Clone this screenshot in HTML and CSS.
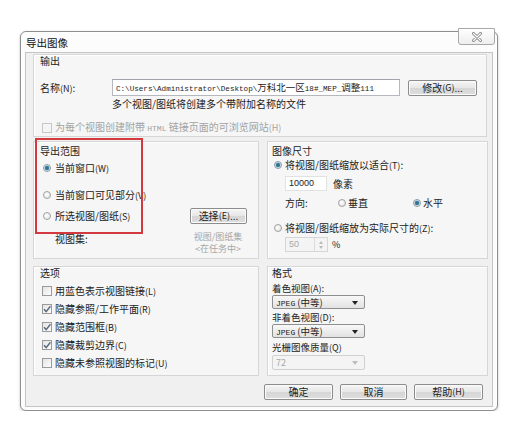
FILE: index.html
```html
<!DOCTYPE html>
<html lang="zh-CN">
<head>
<meta charset="utf-8">
<title>导出图像</title>
<link rel="stylesheet" href="styles.css">
</head>
<body>
<div class="dialog">
  <div class="titlebar">导出图像</div>
  <div class="close">
    <svg width="12" height="10" viewBox="0 0 12 10"><path d="M2.5 1.5 L9.5 8.5 M9.5 1.5 L2.5 8.5" stroke="#8a8a8a" stroke-width="3" stroke-linecap="round" fill="none"/><path d="M2.5 1.5 L9.5 8.5 M9.5 1.5 L2.5 8.5" stroke="#fff" stroke-width="1.1" stroke-linecap="round" fill="none"/></svg>
  </div>
  <div class="content">
    <div class="group output">
      <div class="legend">输出</div>
      <div class="name-row">
        <span class="name-label">名称<span class="k">(N)</span>:</span>
        <div class="path-input">C:\Users\Administrator\Desktop\<span class="cjk">万科北一区</span>18#_MEP_<span class="cjk">调整</span>111</div>
        <div class="btn btn-modify">修改<span class="k">(G)</span>...</div>
      </div>
      <div class="note">多个视图/图纸将创建多个带附加名称的文件</div>
      <div class="check-row disabled">
        <span class="checkbox"></span>
        <span>为每个视图创建附带 <span class="mono">HTML</span> 链接页面的可浏览网站<span class="k">(H)</span></span>
      </div>
    </div>

    <div class="grid">
      <div class="group range">
        <div class="redbox"></div>
        <div class="legend">导出范围</div>
        <div class="radio-row r1"><span class="radio on"></span><span>当前窗口<span class="k">(W)</span></span></div>
        <div class="radio-row r2"><span class="radio"></span><span>当前窗口可见部分<span class="k">(V)</span></span></div>
        <div class="range-grid">
          <div class="radio-row"><span class="radio"></span><span>所选视图/图纸<span class="k">(S)</span></span></div>
          <div class="btn btn-select">选择<span class="k">(E)</span>...</div>
          <div class="viewset">视图集:</div>
          <div class="viewset-val"><div>视图/图纸集</div><div class="vs2">&lt;在任务中&gt;</div></div>
        </div>
      </div>

      <div class="group size">
        <div class="legend">图像尺寸</div>
        <div class="radio-row s1"><span class="radio on"></span><span>将视图/图纸缩放以适合<span class="k">(T)</span>:</span></div>
        <div class="px-row"><div class="num-input">10000</div><span class="unit">像素</span></div>
        <div class="dir-row">
          <span>方向:</span>
          <span class="radio-row"><span class="radio"></span><span>垂直</span></span>
          <span class="radio-row"><span class="radio on"></span><span>水平</span></span>
        </div>
        <div class="radio-row s2"><span class="radio"></span><span>将视图/图纸缩放为实际尺寸的<span class="k">(Z)</span>:</span></div>
        <div class="spin-row">
          <div class="spin"><span class="spin-val">50</span><span class="spin-btns"><span class="up"></span><span class="down"></span></span></div>
          <span class="pct">%</span>
        </div>
      </div>

      <div class="group options">
        <div class="legend">选项</div>
        <div class="check-row"><span class="checkbox"></span><span>用蓝色表示视图链接<span class="k">(L)</span></span></div>
        <div class="check-row"><span class="checkbox checked"><svg width="10" height="10" viewBox="0 0 10 10"><path d="M2 5.2 L4.2 7.6 L8.4 2.2" stroke="#5b6b7a" stroke-width="1.5" fill="none"/></svg></span><span>隐藏参照/工作平面<span class="k">(R)</span></span></div>
        <div class="check-row"><span class="checkbox checked"><svg width="10" height="10" viewBox="0 0 10 10"><path d="M2 5.2 L4.2 7.6 L8.4 2.2" stroke="#5b6b7a" stroke-width="1.5" fill="none"/></svg></span><span>隐藏范围框<span class="k">(B)</span></span></div>
        <div class="check-row"><span class="checkbox checked"><svg width="10" height="10" viewBox="0 0 10 10"><path d="M2 5.2 L4.2 7.6 L8.4 2.2" stroke="#5b6b7a" stroke-width="1.5" fill="none"/></svg></span><span>隐藏裁剪边界<span class="k">(C)</span></span></div>
        <div class="check-row"><span class="checkbox"></span><span>隐藏未参照视图的标记<span class="k">(U)</span></span></div>
      </div>

      <div class="group format">
        <div class="legend">格式</div>
        <div class="flabel">着色视图<span class="k">(A)</span>:</div>
        <div class="select"><span><span class="mono">JPEG</span> (中等)</span><span class="arrow"></span></div>
        <div class="flabel">非着色视图<span class="k">(D)</span>:</div>
        <div class="select"><span><span class="mono">JPEG</span> (中等)</span><span class="arrow"></span></div>
        <div class="flabel">光栅图像质量<span class="k">(Q)</span></div>
        <div class="select disabled"><span>72</span><span class="arrow"></span></div>
      </div>
    </div>

    <div class="buttons">
      <div class="btn b1">确定</div>
      <div class="btn b2">取消</div>
      <div class="btn b3">帮助<span class="k">(H)</span></div>
    </div>
  </div>
</div>
</body>
</html>
```

FILE: styles.css
```css
* { box-sizing: border-box; }

body {
  margin: 0;
  padding: 31px 0 0 20px;
  background: #fff;
  font-family: "Noto Sans CJK SC", "Noto Sans", sans-serif;
  font-size: 10px;
  color: #222;
}

.dialog {
  position: relative;
  width: 478px;
  height: 380px;
  border: 1px solid #8e8e8e;
  border-radius: 6px;
  background: #fcfcfc;
  box-shadow: 0 1px 3px rgba(0,0,0,0.22), inset 0 0 0 1px #fff;
  display: flex;
  flex-direction: column;
}

.titlebar {
  height: 20px;
  line-height: 21px;
  padding-left: 5px;
  font-size: 10.5px;
  color: #111;
}

.close {
  position: absolute;
  top: -4px;
  right: 2px;
  width: 37px;
  height: 17px;
  border: 1px solid #a8a8a8;
  border-radius: 0 0 3px 3px;
  background: linear-gradient(#ffffff, #eeeeee);
  display: flex;
  align-items: center;
  justify-content: center;
}

.content {
  flex: 1;
  margin: 0 4px 3px;
  border: 1px solid #c4c4c4;
  background: #f0f0f0;
  padding: 1px 5px 0 7px;
  display: flex;
  flex-direction: column;
}

.group {
  position: relative;
  border: 1px solid #d6d6d6;
  background: #f6f6f6;
  box-shadow: inset 1px 1px 0 #fff;
}

.legend {
  line-height: 12px;
  height: 12px;
}

.k { font-size: 9px; }
.mono { font-family: "Liberation Mono", monospace; font-size: 8px; }

/* output */
.output {
  height: 83px;
  padding: 0 6px;
}

.name-row {
  margin-top: 12px;
  display: flex;
  align-items: center;
  height: 17px;
}

.name-label { width: 72px; }

.path-input {
  width: 288px;
  height: 17px;
  border: 1px solid #b5b8bf;
  border-top-color: #a0a3aa;
  background: #fff;
  font-family: "Liberation Mono", "Noto Sans CJK SC", monospace;
  font-size: 7.6px;
  line-height: 15px;
  padding-left: 3px;
  white-space: nowrap;
  overflow: hidden;
}

.path-input .cjk {
  font-family: "Noto Sans CJK SC", sans-serif;
  font-size: 9.5px;
}

.btn {
  height: 16px;
  border: 1px solid #8c8c8c;
  border-radius: 2px;
  background: linear-gradient(#f6f6f6 0%, #e6e6e6 50%, #d6d6d6 51%, #dedede 100%);
  box-shadow: inset 0 0 0 1px #fbfbfb;
  display: flex;
  align-items: center;
  justify-content: center;
  line-height: 12px;
}

.btn-modify { width: 69px; margin-left: 8px; }

.note {
  margin-top: 2px;
  padding-left: 72px;
  line-height: 12px;
}

.check-row {
  display: flex;
  align-items: center;
  height: 12px;
  line-height: 12px;
}

.output .check-row { margin-top: 12px; }

.checkbox {
  width: 10px;
  height: 10px;
  margin-left: 2px;
  margin-right: 3px;
  border: 1px solid #9a9a9a;
  background: linear-gradient(135deg, #e4e4e4, #fdfdfd);
  display: flex;
  align-items: center;
  justify-content: center;
  flex: none;
}

.checkbox svg { display: block; margin: -1px; }

.disabled { color: #a3a3a3; }
.disabled .checkbox { border-color: #c6c6c6; background: #f4f4f4; }

/* grid */
.grid {
  margin-top: 4px;
  display: grid;
  grid-template-columns: 226px 221px;
  grid-template-rows: 118px 110px;
  column-gap: 8px;
  row-gap: 7px;
}

.range { padding: 3px 6px 0; }

.redbox {
  position: absolute;
  left: 1px;
  top: -4px;
  width: 108px;
  height: 96px;
  border: 2px solid #d23a3f;
}

.radio-row {
  display: flex;
  align-items: center;
  height: 12px;
  line-height: 12px;
  white-space: nowrap;
}

.radio {
  width: 8px;
  height: 8px;
  border-radius: 50%;
  border: 1px solid #a2a2a2;
  background: radial-gradient(circle at 40% 40%, #fff, #dcdcdc);
  margin-left: 3px;
  margin-right: 4px;
  flex: none;
}

.radio.on {
  background: radial-gradient(circle, #2f6c8c 0, #3a7d9c 1.8px, #cfe0ea 2.6px, #f4f4f4 4px);
  border-color: #8a9aa6;
}

.range .r1 { margin-top: 5px; }
.range .r2 { margin-top: 15px; }

.range-grid {
  margin-top: 7px;
  display: grid;
  grid-template-columns: 148px 60px;
  grid-template-rows: 16px 22px;
  row-gap: 7px;
  align-items: center;
}

.btn-select { width: 57px; margin-left: 2px; }

.viewset {
  align-self: start;
  padding-top: 2px;
  padding-left: 15px;
  line-height: 12px;
}

.viewset-val {
  align-self: start;
  text-align: center;
  font-size: 9px;
  line-height: 11px;
  color: #a6a6a6;
  white-space: nowrap;
}

.viewset-val .vs2 { margin-top: 1px; }

/* size */
.size { padding: 3px 4px 0; }
.size .radio { margin-left: 2px; margin-right: 3px; }
.size .s1 { margin-top: 2px; }

.px-row {
  margin-top: 5px;
  padding-left: 13px;
  display: flex;
  align-items: center;
  height: 15px;
}

.num-input {
  width: 42px;
  height: 15px;
  border: 1px solid #e2e2e2;
  background: #fff;
  font-family: "Liberation Sans", sans-serif;
  font-size: 9px;
  line-height: 13px;
  padding-left: 3px;
}

.unit { margin-left: 6px; }

.dir-row {
  margin-top: 6px;
  padding-left: 13px;
  display: grid;
  grid-template-columns: 53px 75px auto;
  height: 12px;
  line-height: 12px;
}

.dir-row .radio { margin-left: 0; margin-right: 2px; }

.size .s2 { margin-top: 13px; }

.spin-row {
  margin-top: 3px;
  padding-left: 13px;
  display: flex;
  align-items: center;
  height: 15px;
}

.spin {
  width: 43px;
  height: 15px;
  border: 1px solid #d6d6d6;
  background: #f4f4f4;
  display: flex;
  justify-content: space-between;
  color: #a8a8a8;
  font-family: "Liberation Sans", sans-serif;
  font-size: 9px;
  line-height: 13px;
}

.spin-val { padding-left: 3px; }

.spin-btns {
  width: 13px;
  border-left: 1px solid #dcdcdc;
  display: flex;
  flex-direction: column;
  align-items: center;
  justify-content: center;
  gap: 2px;
}

.spin-btns .up {
  border-left: 2.5px solid transparent;
  border-right: 2.5px solid transparent;
  border-bottom: 3px solid #bbb;
}

.spin-btns .down {
  border-left: 2.5px solid transparent;
  border-right: 2.5px solid transparent;
  border-top: 3px solid #bbb;
}

.pct { margin-left: 4px; font-size: 9px; }

/* options */
.options { padding: 0 6px; }
.options .check-row { margin-top: 6px; }

/* format */
.format { padding: 0 4px; }

.flabel {
  font-size: 9.5px;
  line-height: 12px;
  height: 12px;
  margin-top: 3px;
}

.format .flabel:nth-of-type(4) { margin-top: 2px; }

.select {
  margin-top: 1px;
  width: 93px;
  height: 14px;
  border: 1px solid #8f8f8f;
  border-radius: 2px;
  background: linear-gradient(#f8f8f8, #e2e2e2);
  display: flex;
  align-items: center;
  justify-content: space-between;
  padding: 1px 6px 0 3px;
  font-size: 9.5px;
  line-height: 12px;
  white-space: nowrap;
}

.select .arrow {
  border-left: 3.5px solid transparent;
  border-right: 3.5px solid transparent;
  border-top: 4px solid #222;
}

.select.disabled {
  margin-top: 2px;
  height: 15px;
  border-color: #d0d0d0;
  background: #f4f4f4;
  color: #a8a8a8;
  font-size: 9px;
}

.select.disabled .arrow { border-top-color: #bdbdbd; }

/* buttons */
.buttons {
  margin-top: 8px;
  display: flex;
  justify-content: flex-end;
  gap: 7px;
  padding-right: 4px;
}

.b1, .b3 { width: 69px; }
.b2 { width: 67px; }
```
